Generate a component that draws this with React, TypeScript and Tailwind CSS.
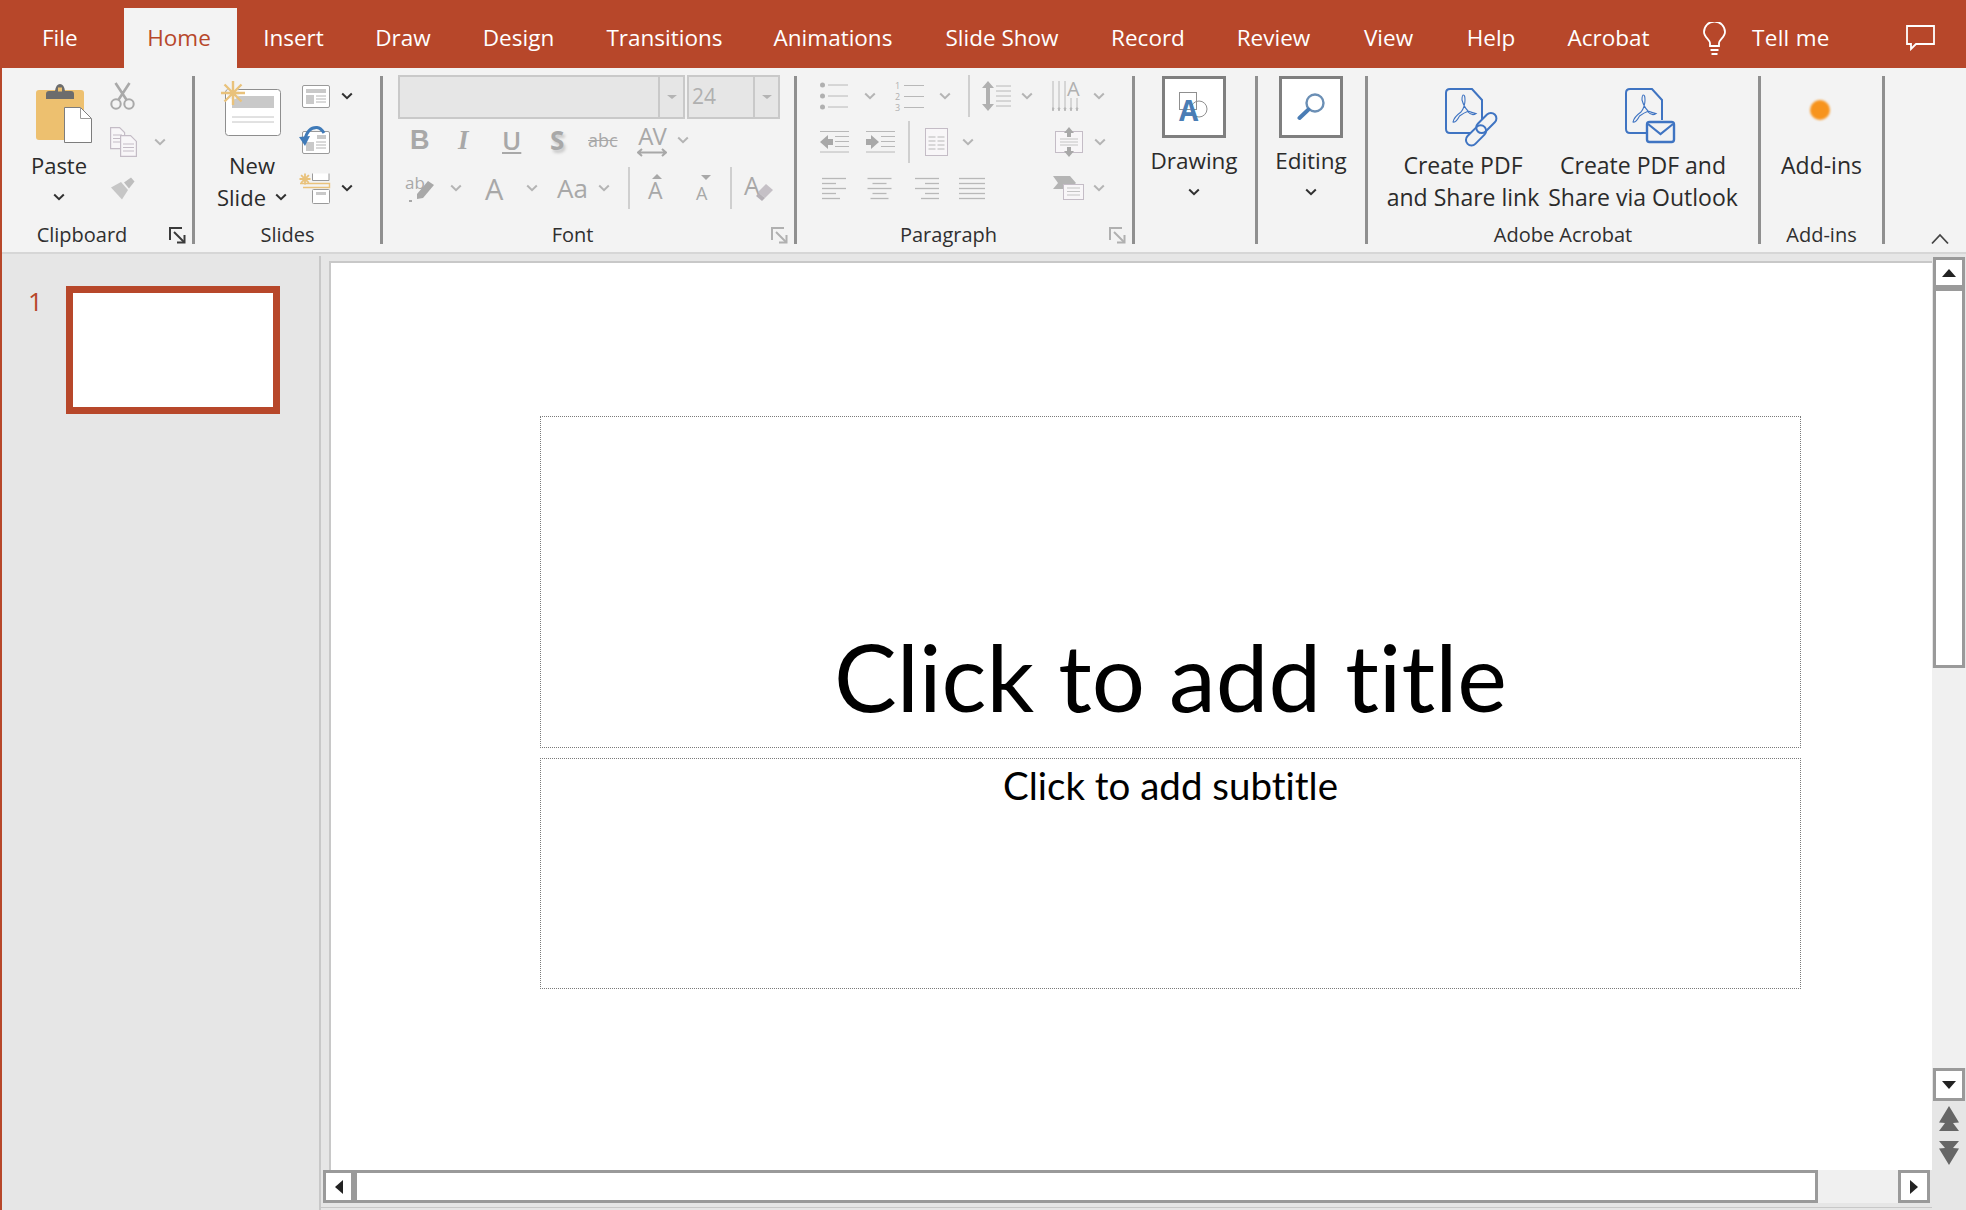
import React from 'react';

/* ---------- tabs ---------- */

const TABS = [
  { label: 'Insert', w: 'w-[113px]' },
  { label: 'Draw', w: 'w-[106px]' },
  { label: 'Design', w: 'w-[125px]' },
  { label: 'Transitions', w: 'w-[167px]' },
  { label: 'Animations', w: 'w-[170px]' },
  { label: 'Slide Show', w: 'w-[168px]' },
  { label: 'Record', w: 'w-[124px]' },
  { label: 'Review', w: 'w-[127px]' },
  { label: 'View', w: 'w-[103px]' },
  { label: 'Help', w: 'w-[102px]' },
  { label: 'Acrobat', w: 'w-[133px]' },
];

const UI = "font-['Open_Sans',sans-serif]";

/* ---------- small shared bits ---------- */

function Chev({ dim, className = '' }: { dim?: boolean; className?: string }) {
  return (
    <svg width="12" height="8" viewBox="0 0 12 8" className={`shrink-0 ${className}`} fill="none">
      <path d="M1.2 1.5 6 6.2l4.8-4.7" stroke={dim ? '#b4b4b4' : '#303030'} strokeWidth="2" />
    </svg>
  );
}

function Launcher({ dim }: { dim?: boolean }) {
  const c = dim ? '#b0b0b0' : '#3a3a3a';
  return (
    <svg width="17" height="17" viewBox="0 0 17 17" fill="none" stroke={c} strokeWidth="2">
      <path d="M1 13V1h12" />
      <path d="m5 5 10 10" />
      <path d="M15.5 8v7.5H8" />
    </svg>
  );
}

function Sep() {
  return <div className="mt-[8px] h-[168px] w-[3px] shrink-0 bg-[#8f8f8f]" />;
}

function MiniSep({ className = '' }: { className?: string }) {
  return <div className={`h-[42px] w-[2px] shrink-0 bg-[#cfcfcf] ${className}`} />;
}

function GroupLabel({ children, launcher, dim, className = '' }: { children: React.ReactNode; launcher?: boolean; dim?: boolean; className?: string }) {
  return (
    <div className={`relative flex h-[34px] items-center justify-center text-[20px] text-[#2f2f2f] ${className}`}>
      {children}
      {launcher && (
        <div className="absolute right-[6px] top-[9px]">
          <Launcher dim={dim} />
        </div>
      )}
    </div>
  );
}

/* ---------- clipboard icons ---------- */

function PasteIcon() {
  return (
    <svg width="56" height="60" viewBox="0 0 56 60">
      <rect x="0" y="7" width="48" height="50" rx="3" fill="#edc06f" />
      <path d="M10 16v-5q0-3 3-3h6q1-7 5-7t5 7h6q3 0 3 3v5z" fill="#6c6c6c" />
      <rect x="22" y="4.5" width="4" height="4" fill="#edc06f" />
      <path d="M28.5 24.5h16l11 11v24h-27z" fill="#fff" stroke="#7d7d7d" />
      <path d="M44.5 24.5v11h11" fill="none" stroke="#9a9a9a" />
    </svg>
  );
}

function CutIcon() {
  return (
    <svg width="25" height="28" viewBox="0 0 25 28" fill="none" stroke="#a9a9a9" strokeWidth="2">
      <circle cx="6" cy="22" r="4.7" />
      <circle cx="19" cy="22" r="4.7" />
      <path d="M8.5 17.8 19.5 1M16.5 17.8 5.5 1" strokeWidth="2.6" />
    </svg>
  );
}

function CopyIcon() {
  return (
    <svg width="27" height="30" viewBox="0 0 27 30" fill="#f8f6f8" stroke="#c4bcc6" strokeWidth="1.2">
      <path d="M.6.6h9l5 5v16H.6z" />
      <path d="M3 8h9M3 11.5h9M3 15h9" />
      <path d="M10.6 8.6h10l5.8 5.8v15H10.6z" />
      <path d="M13 17h11M13 20.5h11M13 24h11" />
    </svg>
  );
}

function PainterIcon() {
  return (
    <svg width="25" height="23" viewBox="0 0 25 23">
      <path d="M1 10.5 11 5l7 8-6 9.5z" fill="#c6c6c6" />
      <path d="m14 5.5 7-5 3.5 4-5.5 7z" fill="#bdbdbd" />
    </svg>
  );
}

/* ---------- slides icons ---------- */

function Sun({ cx, cy, r, c = '#e9c27b', w = 2 }: { cx: number; cy: number; r: number; c?: string; w?: number }) {
  const spokes = [0, 45, 90, 135].map((a) => {
    const t = (a * Math.PI) / 180;
    return `M${cx - Math.cos(t) * r} ${cy - Math.sin(t) * r}L${cx + Math.cos(t) * r} ${cy + Math.sin(t) * r}`;
  });
  return <path d={spokes.join('')} stroke={c} strokeWidth={w} fill="none" />;
}

function NewSlideIcon() {
  return (
    <svg width="60" height="56" viewBox="0 0 60 56">
      <rect x="4.5" y="9.5" width="55" height="46" rx="3" fill="#fff" stroke="#8e8e8e" />
      <rect x="11" y="16" width="42" height="12" fill="#c9c9c9" />
      <path d="M11 37h42M11 42h42" stroke="#c4c4c4" />
      <circle cx="12" cy="13" r="6.5" fill="#f3f3f3" />
      <Sun cx={12} cy={13} r={12} w={2.4} />
    </svg>
  );
}

function LayoutIcon() {
  return (
    <svg width="28" height="23" viewBox="0 0 28 23">
      <rect x=".5" y=".5" width="27" height="22" rx="1.5" fill="#fff" stroke="#9a9a9a" />
      <rect x="4" y="4" width="20" height="4" fill="#c9c9c9" />
      <rect x="4" y="10" width="8" height="9" fill="#c9c9c9" />
      <path d="M14 11h10M14 14h10M14 17h10" stroke="#b4b4b4" />
    </svg>
  );
}

function ResetIcon() {
  return (
    <svg width="32" height="29" viewBox="0 0 32 29">
      <rect x="3.5" y="6.5" width="27" height="22" rx="1.5" fill="#fff" stroke="#9a9a9a" />
      <rect x="7" y="17" width="8" height="9" fill="#c9c9c9" />
      <path d="M17 17h10M17 20h10M17 23h10" stroke="#b4b4b4" />
      <rect x="18" y="10" width="9" height="4" fill="#c9c9c9" />
      <path d="M6 14Q9 2 18 2.500q4 .5 7 5.500" fill="none" stroke="#3f7ab8" strokeWidth="3" />
      <path d="m0 12 11-1-5 10z" fill="#3f7ab8" />
    </svg>
  );
}

function SectionIcon() {
  return (
    <svg width="32" height="31" viewBox="0 0 32 31">
      <path d="M13.500 .5v7h16.500v-7" fill="#fff" stroke="#9a9a9a" />
      <path d="M1 10.500h29.500v4H4" fill="none" stroke="#e9c27b" strokeWidth="1.400" />
      <rect x="13.500" y="16.500" width="17" height="14" rx="1" fill="#fff" stroke="#9a9a9a" />
      <rect x="17" y="19" width="10" height="3" fill="#c9c9c9" />
      <Sun cx={6} cy={6} r={5.500} w={1.800} />
    </svg>
  );
}

/* ---------- font icons (real glyphs in grey) ---------- */

const GLYPH = 'shrink-0 text-[#a8a8a8] leading-none';

function HighlightIcon() {
  return (
    <div className="relative h-[28px] w-[30px]">
      <span className="absolute left-0 top-0 text-[17px] leading-[17px] text-[#a8a8a8]">ab</span>
      <svg width="30" height="28" viewBox="0 0 30 28" className="absolute left-0 top-0">
        <path d="m12 20 11-13 6 4-11 13-6 1z" fill="#a8a8a8" />
        <path d="M4 27h3" stroke="#a8a8a8" strokeWidth="2" />
      </svg>
    </div>
  );
}

function GrowIcon({ up }: { up: boolean }) {
  return (
    <div className={`relative flex h-[28px] items-end ${up ? 'w-[17px]' : 'w-[15px]'}`}>
      <span className={`font-medium leading-none text-[#a8a8a8] ${up ? 'text-[23px]' : 'text-[18px]'}`}>A</span>
      <svg width="17" height="6" viewBox="0 0 17 6" className="absolute left-0 top-0" fill="#a8a8a8">
        {up ? <path d="m9 0 5 5H4z" /> : <path d="M5 1h10l-5 5z" />}
      </svg>
    </div>
  );
}

function ClearIcon() {
  return (
    <div className="relative h-[30px] w-[30px]">
      <span className="absolute left-0 top-0 text-[25px] font-medium leading-[25px] text-[#a8a8a8]">A</span>
      <svg width="30" height="30" viewBox="0 0 30 30" className="absolute left-0 top-0">
        <path d="m14 19 8-8 7 6-8 8z" fill="#c5c0c6" />
        <path d="m12 23 3-3 6 5-3 3z" fill="#b5b0b6" />
      </svg>
    </div>
  );
}

function AvIcon() {
  return (
    <div className="flex w-[30px] shrink-0 flex-col items-center">
      <span className={`${GLYPH} text-[24px] tracking-[-1px]`}>AV</span>
      <svg width="30" height="9" viewBox="0 0 30 9" fill="none" stroke="#a8a8a8" strokeWidth="2">
        <path d="M1 4.500h28M5 1 1 4.500 5 8M25 1l4 3.500L25 8" />
      </svg>
    </div>
  );
}

/* ---------- paragraph icons ---------- */

const L = '#b8b8b8';

function Bullets() {
  return (
    <svg width="28" height="28" viewBox="0 0 28 28">
      <circle cx="2.500" cy="3" r="2.500" fill="#b0b0b0" />
      <circle cx="2.500" cy="14" r="2.500" fill="#b0b0b0" />
      <circle cx="2.500" cy="25" r="2.500" fill="#b0b0b0" />
      <path d="M8 3h20M8 14h20M8 25h20" stroke={L} />
    </svg>
  );
}

function Numbers() {
  return (
    <div className="flex w-[29px] flex-col">
      {['1', '2', '3'].map((n) => (
        <div key={n} className="flex h-[11px] items-center">
          <span className="w-[9px] text-[9px] leading-[11px] text-[#b0b0b0]">{n}</span>
          <div className="h-[1px] w-[20px] bg-[#b8b8b8]" />
        </div>
      ))}
    </div>
  );
}

function LineSpacing() {
  return (
    <svg width="29" height="30" viewBox="0 0 29 30">
      <path d="m6 0 6 7H8v16h4l-6 7-6-7h4V7H0z" fill="#b0b0b0" />
      <path d="M14 5h15M14 10h15M14 15h15M14 20h15M14 25h15" stroke={L} />
    </svg>
  );
}

function TextDir() {
  return (
    <div className="relative h-[32px] w-[30px]">
      <svg width="30" height="32" viewBox="0 0 30 32" className="absolute left-0 top-0">
        <path d="M1 1v28M7 1v28M13 1v28" stroke={L} />
        <path d="M19 18v11M25 18v11" stroke={L} />
        <path d="M1 31l-1-3h2zM7 31l-1-3h2zM13 31l-1-3h2zM19 31l-1-3h2zM25 31l-1-3h2z" fill={L} stroke={L} />
      </svg>
      <span className="absolute left-[15px] top-0 text-[20px] leading-[18px] text-[#b0b0b0]">A</span>
    </div>
  );
}

function Indent({ dec }: { dec?: boolean }) {
  return (
    <svg width="29" height="22" viewBox="0 0 29 22">
      <path d="M0 .5h29M15 5.500h14M15 10.500h14M15 15.500h14M0 21h29" stroke={L} />
      {dec ? <path d="M0 11 8 4v4h5v6H8v4z" fill="#a8a8a8" /> : <path d="M13 11 5 4v4H0v6h5v4z" fill="#a8a8a8" />}
    </svg>
  );
}

function Columns() {
  return (
    <svg width="23" height="28" viewBox="0 0 23 28">
      <rect x=".5" y=".5" width="22" height="27" fill="#f8f6f8" stroke="#c4bcc6" />
      <path d="M3.500 9h7M12.500 9h7M3.500 13h7M12.500 13h7M3.500 17h7M12.500 17h7M3.500 21h7M12.500 21h7" stroke={L} />
    </svg>
  );
}

function AlignText() {
  return (
    <svg width="28" height="30" viewBox="0 0 28 30">
      <rect x=".5" y="4.500" width="27" height="21" fill="#f8f6f8" stroke="#c4bcc6" />
      <path d="M5 12h18M5 15h18M5 18h18" stroke="#c4c4c4" />
      <path d="m14 0 5 6h-3v4h-4V6H9zM14 30l5-6h-3v-4h-4v4H9z" fill="#a8a8a8" />
    </svg>
  );
}

function AlignLines({ kind }: { kind: 'left' | 'center' | 'right' | 'justify' }) {
  const w = kind === 'justify' ? 26 : 25;
  const rows = kind === 'justify' ? [26, 26, 26, 26, 26] : [24, 14, 24, 14, 18];
  return (
    <svg width={w} height="23" viewBox={`0 0 ${w} 23`}>
      {rows.map((len, i) => {
        const x = kind === 'center' ? (w - len) / 2 : kind === 'right' ? w - len : 0;
        return <path key={i} d={`M${x} ${i * 5 + 1.5}h${len}`} stroke={L} strokeWidth="1.3" />;
      })}
    </svg>
  );
}

function SmartArt() {
  return (
    <svg width="31" height="24" viewBox="0 0 31 24">
      <path d="M0 0h17l6 7-6 6H0l5-6z" fill="#b4b4b4" />
      <rect x="10.500" y="8.500" width="20" height="15" fill="#f8f6f8" stroke="#c4bcc6" />
      <path d="M14 12h13M14 15.500h13M14 19h13" stroke="#c4c4c4" />
    </svg>
  );
}

/* ---------- drawing / editing / acrobat ---------- */

function DrawingIcon() {
  return (
    <div className="relative h-[30px] w-[30px]">
      <svg width="30" height="30" viewBox="0 0 30 30" className="absolute left-0 top-0">
        <rect x=".5" y=".5" width="17" height="17" fill="none" stroke="#8f8f8f" />
        <circle cx="20" cy="17" r="8" fill="none" stroke="#8f8f8f" />
      </svg>
      <span className="absolute left-0 top-[6px] text-[28px] font-bold leading-[24px] text-[#4a7db5]">A</span>
    </div>
  );
}

function SearchIcon() {
  return (
    <svg width="28" height="30" viewBox="0 0 28 30" fill="none">
      <circle cx="18" cy="11" r="8.500" stroke="#6b8fb5" strokeWidth="2.400" />
      <path d="m11.500 17.500-9 8.500" stroke="#4a7db5" strokeWidth="4" strokeLinecap="round" />
    </svg>
  );
}

const BLUE = '#3f74c2';

function PdfDoc() {
  return (
    <>
      <path d="M27 45H5q-4 0-4-4V5q0-4 4-4h22l10 11v20" fill="none" stroke={BLUE} strokeWidth="2" />
      <path
        d="M8 34q1-5 8-10 4-5 4-12 0-5-1.500-5T17 12q2 7 6 11 5 2 8 2.500-4 3-8.500-2-3 1-8 4.500-3.500 7-6.500 6z"
        fill="none"
        stroke={BLUE}
        strokeWidth="1.100"
      />
    </>
  );
}

function PdfLinkIcon() {
  return (
    <svg width="52" height="56" viewBox="0 0 52 56" fill="none" className="overflow-visible">
      <PdfDoc />
      <g transform="rotate(-45 36 41)" stroke={BLUE} strokeWidth="2">
        <rect x="16" y="36.500" width="24" height="11" rx="5.500" fill="#f3f3f3" />
        <rect x="32" y="35" width="24" height="11" rx="5.500" fill="none" />
      </g>
    </svg>
  );
}

function PdfMailIcon() {
  return (
    <svg width="52" height="56" viewBox="0 0 52 56" fill="none">
      <PdfDoc />
      <rect x="22" y="34" width="27" height="20" rx="2.500" fill="#f3f3f3" stroke={BLUE} strokeWidth="2.400" />
      <path d="m23 36 12.500 10L48 36" stroke={BLUE} strokeWidth="2.200" />
    </svg>
  );
}

/* ---------- ribbon groups ---------- */

function Row({ children, className = '' }: { children: React.ReactNode; className?: string }) {
  return <div className={`flex h-[46px] items-center ${className}`}>{children}</div>;
}

function ClipboardGroup() {
  return (
    <div className="flex h-[184px] w-[190px] shrink-0 flex-col">
      <div className="flex h-[150px]">
        <div className="ml-[21px] flex w-[72px] flex-col items-center pt-[15px]">
          <div className="pl-[10px]"><PasteIcon /></div>
          <div className="mt-[8px] flex h-[28px] items-center text-[22px] text-[#2b2b2b]">Paste</div>
          <Chev className="mt-[14px]" />
        </div>
        <div className="ml-[15px] flex flex-col pt-[5px]">
          <Row><CutIcon /></Row>
          <Row><CopyIcon /><Chev dim className="ml-[17px]" /></Row>
          <Row><PainterIcon /></Row>
        </div>
      </div>
      <GroupLabel launcher><span className="mr-[30px]">Clipboard</span></GroupLabel>
    </div>
  );
}

function SlidesGroup() {
  return (
    <div className="flex h-[184px] w-[185px] shrink-0 flex-col">
      <div className="flex h-[150px]">
        <div className="ml-[17px] flex w-[80px] flex-col items-center pt-[12px]">
          <div className="pr-[2px]"><NewSlideIcon /></div>
          <div className="mt-[14px] flex h-[30px] items-center text-[22px] text-[#2b2b2b]">New</div>
          <div className="mt-[2px] flex h-[30px] items-center text-[22px] text-[#2b2b2b]">
            Slide
            <Chev className="ml-[9px]" />
          </div>
        </div>
        <div className="ml-[7px] flex flex-col pt-[5px]">
          <Row className="pl-[3px]"><LayoutIcon /><Chev className="ml-[11px]" /></Row>
          <Row className="-mt-[3px]"><ResetIcon /></Row>
          <Row className="mt-[3px]"><SectionIcon /><Chev className="ml-[10px]" /></Row>
        </div>
      </div>
      <GroupLabel>Slides</GroupLabel>
    </div>
  );
}

function ComboArrow() {
  return (
    <div className="flex w-[25px] items-center justify-center border-l-2 border-[#c9c9c9]">
      <span className="h-0 w-0 border-x-[5px] border-t-[4px] border-x-transparent border-t-[#b4b4b4]" />
    </div>
  );
}

function FontGroup() {
  return (
    <div className="flex h-[184px] w-[411px] shrink-0 flex-col">
      <div className="h-[150px] pl-[15px] pt-[7px]">
        <div className="flex h-[44px]">
          <div className="flex w-[287px] border-2 border-[#c9c9c9] bg-[#e6e6e6]">
            <div className="flex-1" />
            <ComboArrow />
          </div>
          <div className="ml-[2px] flex w-[93px] border-2 border-[#c9c9c9] bg-[#e6e6e6]">
            <div className="flex flex-1 items-center pl-[3px] text-[21px] text-[#b0b0b0]">24</div>
            <ComboArrow />
          </div>
        </div>
        <div className="flex h-[42px] items-center">
          <span className={`${GLYPH} ml-[12px] w-[20px] text-[27px] font-bold font-['Liberation_Sans',sans-serif]`}>B</span>
          <span className={`${GLYPH} ml-[28px] w-[16px] text-[27px] italic font-['Liberation_Serif',serif] font-bold`}>I</span>
          <span className={`${GLYPH} ml-[28px] w-[20px] text-[26px] underline underline-offset-2 font-semibold`}>U</span>
          <span className={`${GLYPH} ml-[28px] w-[18px] text-[26px] font-bold [text-shadow:2px_3px_3px_#c8c8c8]`}>S</span>
          <span className={`${GLYPH} ml-[20px] w-[34px] text-[18px] line-through`}>abc</span>
          <div className="ml-[15px]"><AvIcon /></div>
          <Chev dim className="ml-[10px]" />
        </div>
        <div className="flex h-[54px] items-center">
          <div className="ml-[7px] w-[30px] shrink-0"><HighlightIcon /></div>
          <Chev dim className="ml-[15px]" />
          <span className={`${GLYPH} ml-[23px] w-[22px] text-[29px] font-medium`}>A</span>
          <Chev dim className="ml-[19px]" />
          <span className={`${GLYPH} ml-[19px] w-[34px] text-[26px]`}>Aa</span>
          <Chev dim className="ml-[7px]" />
          <MiniSep className="ml-[18px]" />
          <div className="ml-[18px] w-[17px] shrink-0"><GrowIcon up /></div>
          <div className="ml-[31px] w-[15px] shrink-0"><GrowIcon up={false} /></div>
          <MiniSep className="ml-[19px]" />
          <div className="ml-[12px] shrink-0"><ClearIcon /></div>
        </div>
      </div>
      <GroupLabel launcher dim className="pr-[32px]">Font</GroupLabel>
    </div>
  );
}

function ParagraphGroup() {
  return (
    <div className="flex h-[184px] w-[335px] shrink-0 flex-col">
      <div className="h-[150px] pt-[5px]">
        <Row>
          <div className="ml-[23px]"><Bullets /></div>
          <Chev dim className="ml-[16px]" />
          <div className="ml-[19px]"><Numbers /></div>
          <Chev dim className="ml-[15px]" />
          <MiniSep className="ml-[17px]" />
          <div className="ml-[12px]"><LineSpacing /></div>
          <Chev dim className="ml-[10px]" />
          <div className="ml-[19px]"><TextDir /></div>
          <Chev dim className="ml-[11px]" />
        </Row>
        <Row>
          <div className="ml-[23px]"><Indent dec /></div>
          <div className="ml-[17px]"><Indent /></div>
          <MiniSep className="ml-[13px]" />
          <div className="ml-[15px]"><Columns /></div>
          <Chev dim className="ml-[14px]" />
          <div className="ml-[81px]"><AlignText /></div>
          <Chev dim className="ml-[11px]" />
        </Row>
        <Row>
          <div className="ml-[25px]"><AlignLines kind="left" /></div>
          <div className="ml-[20px]"><AlignLines kind="center" /></div>
          <div className="ml-[22px]"><AlignLines kind="right" /></div>
          <div className="ml-[20px]"><AlignLines kind="justify" /></div>
          <div className="ml-[68px]"><SmartArt /></div>
          <Chev dim className="ml-[9px]" />
        </Row>
      </div>
      <GroupLabel launcher dim className="pr-[32px]">Paragraph</GroupLabel>
    </div>
  );
}

function BigBoxGroup({ label, width, pad, children }: { label: string; width: string; pad: string; children: React.ReactNode }) {
  return (
    <div className={`flex h-[184px] shrink-0 flex-col items-center pt-[8px] ${width} ${pad}`}>
      <div className="flex h-[62px] w-[64px] items-center justify-center border-[3px] border-[#7f7f7f] bg-white">{children}</div>
      <div className="mt-[8px] flex h-[30px] items-center text-[22.5px] text-[#2b2b2b]">{label}</div>
      <Chev className="mt-[12px]" />
    </div>
  );
}

function AcrobatGroup() {
  return (
    <div className="flex h-[184px] w-[390px] shrink-0 flex-col">
      <div className="flex h-[150px] text-[23px] leading-[32px] text-[#2b2b2b]">
        <div className="flex w-[190px] flex-col items-center pt-[20px]">
          <div className="h-[61px] pl-[16px]"><PdfLinkIcon /></div>
          <div className="whitespace-nowrap text-center">Create PDF<br />and Share link</div>
        </div>
        <div className="flex w-[170px] flex-col items-center pt-[20px]">
          <div className="h-[61px] pl-[16px]"><PdfMailIcon /></div>
          <div className="whitespace-nowrap text-center">Create PDF and<br />Share via Outlook</div>
        </div>
      </div>
      <GroupLabel>Adobe Acrobat</GroupLabel>
    </div>
  );
}

function AddinsGroup() {
  return (
    <div className="flex h-[184px] w-[121px] shrink-0 flex-col">
      <div className="flex h-[150px] flex-col items-center pt-[32px]">
        <div className="mr-[3px] h-[20px] w-[20px] rounded-full bg-[#f7941d] blur-[1px]" />
        <div className="mt-[29px] text-[23px] leading-[32px] text-[#2b2b2b]">Add-ins</div>
      </div>
      <GroupLabel>Add-ins</GroupLabel>
    </div>
  );
}

/* ---------- scrollbars ---------- */

function ScrollBtn({ dir, className = '' }: { dir: 'up' | 'down' | 'left' | 'right'; className?: string }) {
  const arrows = {
    up: 'border-x-[7px] border-b-[8px] border-x-transparent border-b-[#222]',
    down: 'border-x-[7px] border-t-[8px] border-x-transparent border-t-[#222]',
    left: 'border-y-[7px] border-r-[8px] border-y-transparent border-r-[#222]',
    right: 'border-y-[7px] border-l-[8px] border-y-transparent border-l-[#222]',
  };
  return (
    <div className={`flex items-center justify-center border-[3px] border-[#9a9a9a] bg-white ${className}`}>
      <span className={`h-0 w-0 ${arrows[dir]}`} />
    </div>
  );
}

function DoubleArrow({ down }: { down?: boolean }) {
  return (
    <svg width="20" height="26" viewBox="0 0 20 26" fill="#666">
      {down ? <path d="M0 1h20l-6 7 6 .5L10 25 0 8.500 6 8z" /> : <path d="M10 0 20 16.500 14 17l6 8H0l6-8-6-.5z" />}
    </svg>
  );
}

function VScroll() {
  return (
    <div className="flex w-[34px] shrink-0 flex-col items-center bg-[#e6e6e6] pt-[3px]">
      <ScrollBtn dir="up" className="h-[31px] w-[32px]" />
      <div className="h-[380px] w-[32px] border-[3px] border-[#9a9a9a] bg-white" />
      <div className="h-[400px] w-[34px] bg-[#f0f0f0]" />
      <ScrollBtn dir="down" className="h-[33px] w-[32px]" />
      <div className="mt-[5px]"><DoubleArrow /></div>
      <div className="mt-[8px]"><DoubleArrow down /></div>
    </div>
  );
}

function HScroll() {
  return (
    <div className="flex h-[38px] shrink-0 items-start border-b border-[#c8c8c8] px-[2px]">
      <ScrollBtn dir="left" className="h-[33px] w-[31px] shrink-0" />
      <div className="h-[33px] w-[1464px] shrink-0 border-[3px] border-[#9a9a9a] bg-white" />
      <div className="h-[33px] w-[80px] shrink-0 bg-[#f0f0f0]" />
      <ScrollBtn dir="right" className="h-[33px] w-[32px] shrink-0" />
    </div>
  );
}

/* ---------- page ---------- */

export default function App() {
  return (
    <div className={`flex h-[1210px] w-[1966px] flex-col overflow-hidden bg-[#b7472a] ${UI}`}>
      {/* Tabs */}
      <div className="flex h-[68px] shrink-0 pt-[8px] text-[22.5px] text-white">
        <div className="flex h-[60px] w-[124px] items-center pl-[42px]">File</div>
        <div className="flex h-[60px] w-[113px] items-center justify-center bg-[#f3f3f3] pr-[3px] text-[#b7472a]">Home</div>
        {TABS.map((t) => (
          <div key={t.label} className={`flex h-[60px] items-center justify-center whitespace-nowrap ${t.w}`}>
            {t.label}
          </div>
        ))}
        <div className="ml-[28px] flex h-[60px] items-center">
          <svg width="23" height="33" viewBox="0 0 23 33" fill="none" stroke="#fff" strokeWidth="1.800">
            <path d="M7 24v-3c0-3-6-6-6-11a10.500 10.500 0 0 1 21 0c0 5-6 8-6 11v3z" />
            <path d="M7.500 28h8M8.500 32h6" />
          </svg>
          <span className="ml-[26px] w-[80px] whitespace-nowrap tracking-[0.3px]">Tell me</span>
        </div>
        <div className="ml-[74px] flex h-[60px] items-center">
          <svg width="29" height="26" viewBox="0 0 29 26" fill="none" stroke="#fff" strokeWidth="1.800">
            <path d="M1 1h27v18H10l-5 5v-5H1z" />
          </svg>
        </div>
      </div>

      {/* Ribbon */}
      <div className="ml-[2px] flex h-[186px] shrink-0 items-start border-b-2 border-[#d6d6d6] bg-[#f3f3f3]">
        <ClipboardGroup />
        <Sep />
        <SlidesGroup />
        <Sep />
        <FontGroup />
        <Sep />
        <ParagraphGroup />
        <Sep />
        <BigBoxGroup label="Drawing" width="w-[120px]" pad="pr-[2px]">
          <DrawingIcon />
        </BigBoxGroup>
        <Sep />
        <BigBoxGroup label="Editing" width="w-[107px]" pad="pr-[1px]">
          <SearchIcon />
        </BigBoxGroup>
        <Sep />
        <AcrobatGroup />
        <Sep />
        <AddinsGroup />
        <Sep />
        <div className="ml-[46px] mt-[165px]">
          <svg width="18" height="12" viewBox="0 0 18 12" fill="none" stroke="#444" strokeWidth="1.800">
            <path d="M1 10.500 9 2l8 8.500" />
          </svg>
        </div>
      </div>

      {/* Body */}
      <div className="ml-[2px] flex min-h-0 flex-1 bg-[#e6e6e6]">
        {/* Thumbnails */}
        <div className="flex w-[317px] shrink-0 items-start pl-[26px] pt-[32px]">
          <span className="w-[38px] text-[26px] leading-[30px] text-[#b7472a]">1</span>
          <div className="h-[128px] w-[214px] border-[7px] border-[#b7472a] bg-white" />
        </div>
        <div className="mt-[2px] w-[2px] shrink-0 bg-[#c8c8c8]" />

        {/* Editing area */}
        <div className="flex min-w-0 flex-1 flex-col pt-[7px]">
          <div className="ml-[8px] h-[909px] shrink-0 border-l-2 border-t-2 border-[#c8c8c8] bg-white pl-[209px] pt-[153px]">
            <div className="flex h-[332px] w-[1261px] items-end justify-center border border-dotted border-[#7a7a7a] pb-[18px] font-['Lato',sans-serif] text-[94px] font-normal leading-[106px] text-black [font-variant-ligatures:none]">
              Click to add title
            </div>
            <div className="mt-[10px] flex h-[231px] w-[1261px] justify-center border border-dotted border-[#7a7a7a] font-['Lato',sans-serif] text-[38.5px] leading-[52px] text-black [font-variant-ligatures:none]">
              Click to add subtitle
            </div>
          </div>
          <HScroll />
        </div>
        <VScroll />
      </div>
    </div>
  );
}
